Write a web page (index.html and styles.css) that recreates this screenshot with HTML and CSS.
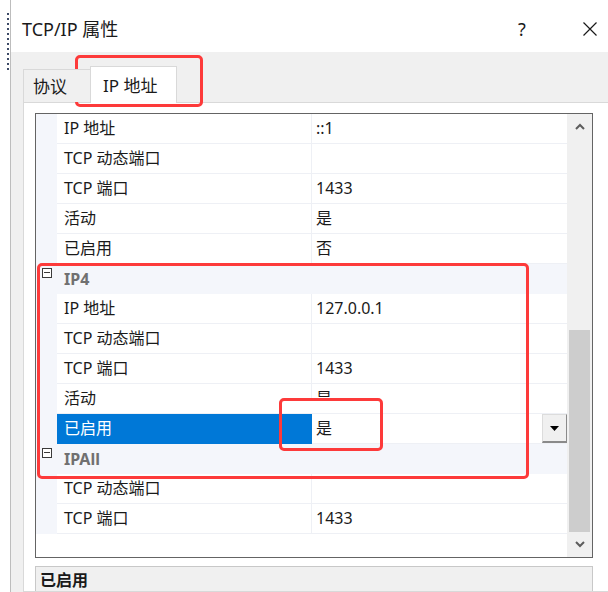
FILE: index.html
```html
<!DOCTYPE html>
<html lang="zh-CN">
<head>
<meta charset="utf-8">
<title>TCP/IP 属性</title>
<link rel="stylesheet" href="styles.css">
</head>
<body>
<div class="screen">
  <div class="edge"></div>
  <div class="dialog">
    <header class="titlebar">
      <span class="title">TCP/IP 属性</span>
      <span class="help">?</span>
      <span class="close">
        <svg width="14" height="14" viewBox="0 0 14 14"><path d="M0.5 0.5 L13.5 13.5 M13.5 0.5 L0.5 13.5" stroke="#1a1a1a" stroke-width="1.2" fill="none"/></svg>
      </span>
    </header>
    <div class="body">
      <div class="tabs">
        <div class="tab">协议</div>
        <div class="tab active">IP 地址</div>
      </div>
      <div class="panel">
        <div class="grid">
          <div class="rows">
            <div class="row"><span class="gutter"></span><span class="name">IP 地址</span><span class="value">::1</span></div>
            <div class="row"><span class="gutter"></span><span class="name">TCP 动态端口</span><span class="value"></span></div>
            <div class="row"><span class="gutter"></span><span class="name">TCP 端口</span><span class="value">1433</span></div>
            <div class="row"><span class="gutter"></span><span class="name">活动</span><span class="value">是</span></div>
            <div class="row"><span class="gutter"></span><span class="name">已启用</span><span class="value">否</span></div>
            <div class="row group"><span class="gutter"><i class="toggle"></i></span><span class="caption">IP4</span></div>
            <div class="row"><span class="gutter"></span><span class="name">IP 地址</span><span class="value">127.0.0.1</span></div>
            <div class="row"><span class="gutter"></span><span class="name">TCP 动态端口</span><span class="value"></span></div>
            <div class="row"><span class="gutter"></span><span class="name">TCP 端口</span><span class="value">1433</span></div>
            <div class="row"><span class="gutter"></span><span class="name">活动</span><span class="value">是</span></div>
            <div class="row selected"><span class="gutter"></span><span class="name">已启用</span><span class="value">是<span class="drop"><svg width="9" height="5" viewBox="0 0 9 5"><path d="M0 0 H9 L4.5 5 Z" fill="#000"/></svg></span></span></div>
            <div class="row group"><span class="gutter"><i class="toggle"></i></span><span class="caption">IPAll</span></div>
            <div class="row"><span class="gutter"></span><span class="name">TCP 动态端口</span><span class="value"></span></div>
            <div class="row"><span class="gutter"></span><span class="name">TCP 端口</span><span class="value">1433</span></div>
          </div>
          <div class="scrollbar">
            <span class="arrow">
              <svg width="10" height="7" viewBox="0 0 10 7"><path d="M1 6 L5 2 L9 6" stroke="#5d5d5d" stroke-width="2" fill="none"/></svg>
            </span>
            <span class="track"><span class="thumb"></span></span>
            <span class="arrow">
              <svg width="10" height="7" viewBox="0 0 10 7"><path d="M1 1 L5 5 L9 1" stroke="#5d5d5d" stroke-width="2" fill="none"/></svg>
            </span>
          </div>
        </div>
        <div class="desc">已启用</div>
      </div>
    </div>
  </div>
  <div class="mark mark-tab"></div>
  <div class="mark mark-group"></div>
  <div class="mark mark-value"></div>
</div>
</body>
</html>
```

FILE: styles.css
```css
* {
  box-sizing: border-box;
}

html, body {
  margin: 0;
  padding: 0;
  background: #ffffff;
}

body {
  font-family: "Noto Sans", "Noto Sans CJK SC", sans-serif;
  font-size: 16px;
  color: #1a1a1a;
}

.screen {
  position: relative;
  width: 608px;
  height: 592px;
  overflow: hidden;
  display: flex;
}

/* torn left edge of the window behind */
.edge {
  width: 11px;
  flex: none;
  border-right: 1px solid #bdbdbd;
  background:
    repeating-linear-gradient(#ffffff 0 3px, #3d4a66 3px 5px) 7px 10px / 2px 62px no-repeat,
    #ffffff;
}

.dialog {
  flex: none;
  width: 597px;
  height: 592px;
  display: flex;
  flex-direction: column;
}

.titlebar {
  flex: none;
  height: 52px;
  background: #ffffff;
  display: flex;
  align-items: center;
  padding: 6px 11px 0 11px;
}

.title {
  font-size: 18px;
  line-height: 22px;
  flex: 1;
}

.help {
  width: 20px;
  text-align: center;
  font-size: 18px;
  line-height: 22px;
  margin-right: 51px;
}

.close {
  width: 14px;
  height: 14px;
  display: flex;
}

.body {
  flex: 1;
  min-height: 0;
  background: #f0f0f0;
  padding: 14px 0 0 12px;
  display: flex;
  flex-direction: column;
}

.tabs {
  flex: none;
  display: flex;
  align-items: flex-end;
  height: 36px;
  position: relative;
  z-index: 1;
  font-size: 17px;
}

.tab {
  height: 33px;
  padding: 0 23px 0 9px;
  border: 1px solid #d9d9d9;
  border-bottom: none;
  line-height: 34px;
  background: #f0f0f0;
}

.tab.active {
  height: 37px;
  margin-bottom: -1px;
  margin-left: -1px;
  padding: 0 19px 0 12px;
  background: #ffffff;
  line-height: 37px;
}

.panel {
  flex: 1;
  min-height: 0;
  overflow: hidden;
  background: #ffffff;
  border: 1px solid #d9d9d9;
  border-right: none;
  padding: 10px 0 0 11px;
  display: flex;
  flex-direction: column;
}

.grid {
  flex: none;
  width: 558px;
  height: 445px;
  border: 1px solid #646464;
  display: flex;
  background: #ffffff;
}

.rows {
  width: 531px;
  display: flex;
  flex-direction: column;
}

.row {
  flex: none;
  height: 30px;
  display: flex;
  line-height: 27px;
}

.gutter {
  width: 21px;
  flex: none;
  background: #f4f6fb;
  position: relative;
}

.name {
  width: 255px;
  flex: none;
  padding: 1px 0 0 7px;
  border-right: 1px solid #eef0f5;
  border-bottom: 1px solid #eef0f5;
  white-space: nowrap;
}

.value {
  width: 255px;
  flex: none;
  padding: 1px 0 0 4px;
  border-bottom: 1px solid #eef0f5;
  display: flex;
  align-items: flex-start;
  justify-content: space-between;
}

.row.group {
  background: #f4f6fb;
}

.caption {
  padding: 2px 0 0 7px;
  font-weight: bold;
  color: #707070;
  line-height: 27px;
}

.toggle {
  position: absolute;
  left: 6px;
  top: 4px;
  width: 10px;
  height: 10px;
  border: 1px solid #3a3a3a;
  background: #ffffff;
}

.toggle::after {
  content: "";
  position: absolute;
  left: 1px;
  right: 1px;
  top: 3px;
  height: 1px;
  background: #3a3a3a;
}

.row.selected .name {
  background: #0078d7;
  color: #ffffff;
  border-color: #0078d7;
}

.drop {
  width: 25px;
  height: 29px;
  margin-top: -1px;
  background: #f0f0f0;
  border: 1px solid #dcdcdc;
  border-right-color: #8a8a8a;
  border-bottom: 2px solid #8a8a8a;
  display: flex;
  align-items: center;
  justify-content: center;
}

.scrollbar {
  width: 25px;
  flex: none;
  background: #f0f0f0;
  display: flex;
  flex-direction: column;
  align-items: center;
}

.arrow {
  height: 25px;
  display: flex;
  align-items: center;
  justify-content: center;
  flex: none;
}

.track {
  flex: 1;
  width: 100%;
  padding: 191px 2px 0 2px;
  display: flex;
}

.thumb {
  flex: 1;
  background: #cdcdcd;
}

.desc {
  margin-top: 8px;
  width: 558px;
  flex: 1;
  min-height: 0;
  background: #f0f0f0;
  border: 1px solid #c8c8c8;
  border-bottom: none;
  padding: 3px 4px 0;
  font-weight: bold;
  line-height: 20px;
}

/* red callout boxes drawn over the dialog */
.mark {
  position: absolute;
  border: 3px solid #fd3a3a;
  border-radius: 5px;
  pointer-events: none;
}

.mark-tab {
  left: 75px;
  top: 55px;
  width: 128px;
  height: 52px;
}

.mark-group {
  left: 37px;
  top: 263px;
  width: 492px;
  height: 216px;
}

.mark-value {
  left: 279px;
  top: 398px;
  width: 104px;
  height: 53px;
  background: linear-gradient(#ffffff 0 12px, transparent 12px);
  background-clip: padding-box;
}
```
